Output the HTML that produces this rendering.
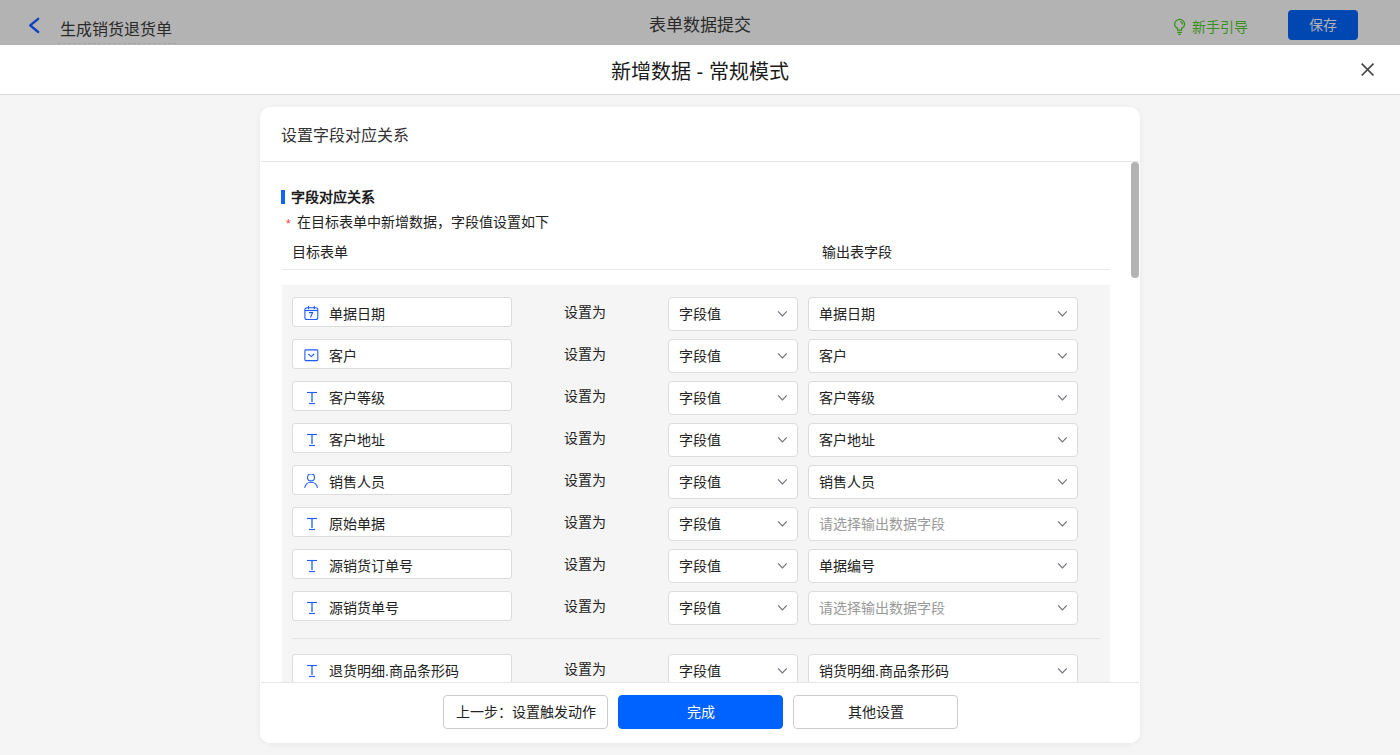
<!DOCTYPE html>
<html lang="zh-CN"><head><meta charset="utf-8">
<style>
*{margin:0;padding:0;box-sizing:border-box}
html,body{width:1400px;height:755px;overflow:hidden;background:#f5f5f5;font-family:"Liberation Sans",sans-serif;color:#222}
.t{position:absolute;white-space:nowrap;line-height:1}
#topbar{position:absolute;left:0;top:0;width:1400px;height:45px;background:#b3b3b3}
#mhead{position:absolute;left:0;top:45px;width:1400px;height:50px;background:#fff;border-bottom:1px solid #dadada}
#card{position:absolute;left:260px;top:107px;width:880px;height:636px;background:#fff;border-radius:10px;overflow:hidden;box-shadow:0 1px 6px rgba(0,0,0,0.06)}
#scroll{position:absolute;left:0;top:55px;width:880px;height:520px;overflow:hidden}
.box{position:absolute;left:292px;width:220px;height:30px;background:#fff;border:1px solid #dcdcdc;border-radius:3px}
.box .ic{position:absolute}
.bt{position:absolute;left:36px;top:8.5px;font-size:14px;line-height:14px;white-space:nowrap;color:#222}
.setas{left:564px;font-size:14px;color:#222}
.sel{position:absolute;height:34px;background:#fff;border:1px solid #dcdcdc;border-radius:4px}
.s1{left:668px;width:130px}
.s2{left:808px;width:270px}
.st{position:absolute;left:10px;top:9px;font-size:14px;line-height:14px;white-space:nowrap;color:#222}
.st.ph{color:#999}
.chev{position:absolute;right:9px;top:12px}
.btn{position:absolute;top:695px;height:34px;width:165px;border:1px solid #cccccc;border-radius:4px;background:#fff;font-size:14px;text-align:center;line-height:32px;color:#222;white-space:nowrap}
</style></head><body>
<div id="topbar">
 <svg style="position:absolute;left:28px;top:17px" width="12" height="17" viewBox="0 0 12 17"><path d="M10.2 1.8L2.2 8.4 10.2 15" fill="none" stroke="#0b40c2" stroke-width="2.3" stroke-linecap="round" stroke-linejoin="round"/></svg>
 <span class="t" style="left:60px;top:22px;font-size:16px;color:#2a2a2a">生成销货退货单</span>
 <div style="position:absolute;left:58px;top:43px;width:120px;height:1px;background-image:linear-gradient(to right,#a5a5a5 60%,transparent 60%);background-size:5px 1px"></div>
 <span class="t" style="left:649px;top:17px;font-size:17px;color:#2a2a2a">表单数据提交</span>
 <svg style="position:absolute;left:1172px;top:17px" width="16" height="19" viewBox="0 0 16 19"><path d="M5.6 13.1v-1.7C3.8 10.3 2.6 9 2.6 7.4a5 5 0 0 1 10 0c0 1.6-1.2 2.9-3 4v1.7z" fill="none" stroke="#3a8f1c" stroke-width="1.25"/><path d="M8.1 4.5a3 3 0 0 1 2.3 3" fill="none" stroke="#3a8f1c" stroke-width="1.25"/><line x1="5.2" y1="15.4" x2="10" y2="15.4" stroke="#3a8f1c" stroke-width="1.2"/><line x1="6.3" y1="17.3" x2="8.9" y2="17.3" stroke="#3a8f1c" stroke-width="1.2"/></svg>
 <span class="t" style="left:1192px;top:20px;font-size:14px;color:#3a8f1c">新手引导</span>
 <div style="position:absolute;left:1288px;top:10px;width:70px;height:30px;background:#0047b2;border-radius:4px"></div>
 <span class="t" style="left:1309px;top:18px;font-size:14px;color:#b3b3b3">保存</span>
</div>
<div id="mhead">
 <span class="t" style="left:611px;top:17px;font-size:20px;color:#1a1a1a">新增数据 - 常规模式</span>
 <svg style="position:absolute;left:1360px;top:17px" width="15" height="15" viewBox="0 0 15 15"><path d="M1.7 1.7l11.8 11.8M13.5 1.7L1.7 13.5" stroke="#454545" stroke-width="1.7"/></svg>
</div>
<div id="card"></div>
<span class="t" style="left:281px;top:128px;font-size:16px;color:#333">设置字段对应关系</span>
<div style="position:absolute;left:261px;top:161px;width:878px;height:1px;background:#e6e6e6"></div>
<div style="position:absolute;left:1131px;top:162px;width:8px;height:116px;background:#b3b3b3;border-radius:4px"></div>
<div style="position:absolute;left:281px;top:190px;width:4px;height:14px;background:#1463ff"></div>
<span class="t" style="left:291px;top:190px;font-size:14px;font-weight:bold;color:#1a1a1a">字段对应关系</span>
<span class="t" style="left:286px;top:218px;font-size:12px;color:#ff3b3b">*</span>
<span class="t" style="left:297px;top:215px;font-size:14px;color:#222">在目标表单中新增数据，字段值设置如下</span>
<span class="t" style="left:292px;top:245px;font-size:14px;color:#222">目标表单</span>
<span class="t" style="left:822px;top:245px;font-size:14px;color:#222">输出表字段</span>
<div style="position:absolute;left:282px;top:269px;width:828px;height:1px;background:#e6e6e6"></div>
<div style="position:absolute;left:282px;top:285px;width:828px;height:398px;background:#f5f5f5"></div>
<div style="position:absolute;left:292px;top:638px;width:808px;height:1px;background:#e2e2e2"></div>
<div class="box" style="top:297px"><svg class="ic" width="16" height="16" viewBox="0 0 16 16" style="left:11px;top:8px"><rect x="0.9" y="1.7" width="12.9" height="11.8" rx="2" fill="none" stroke="#1f5cff" stroke-width="1.1"/><line x1="0.9" y1="4.5" x2="13.8" y2="4.5" stroke="#1f5cff" stroke-width="1.2"/><line x1="4.5" y1="0" x2="4.5" y2="3.2" fill="none" stroke="#1f5cff" stroke-width="1.1"/><line x1="10.3" y1="0" x2="10.3" y2="3.2" fill="none" stroke="#1f5cff" stroke-width="1.1"/><path d="M4.9 6.6h3.7l-2.1 4.9" fill="none" stroke="#1f5cff" stroke-width="1.1"/></svg><span class="bt">单据日期</span></div>
<span class="t setas" style="top:305px">设置为</span>
<div class="sel s1" style="top:297px"><span class="st">字段值</span><svg class="chev" width="12" height="8" viewBox="0 0 12 8"><path d="M2 1.3L6.4 5.9 10.8 1.3" fill="none" stroke="#6b6f78" stroke-width="1.1"/></svg></div>
<div class="sel s2" style="top:297px"><span class="st">单据日期</span><svg class="chev" width="12" height="8" viewBox="0 0 12 8"><path d="M2 1.3L6.4 5.9 10.8 1.3" fill="none" stroke="#6b6f78" stroke-width="1.1"/></svg></div>
<div class="box" style="top:339px"><svg class="ic" width="16" height="16" viewBox="0 0 16 16" style="left:11px;top:8px"><rect x="0.9" y="1.9" width="12.9" height="10.7" rx="0.8" fill="none" stroke="#1f5cff" stroke-width="1.1"/><path d="M4.4 6l2.9 2.6 2.7-2.6" fill="none" stroke="#1f5cff" stroke-width="1.1"/></svg><span class="bt">客户</span></div>
<span class="t setas" style="top:347px">设置为</span>
<div class="sel s1" style="top:339px"><span class="st">字段值</span><svg class="chev" width="12" height="8" viewBox="0 0 12 8"><path d="M2 1.3L6.4 5.9 10.8 1.3" fill="none" stroke="#6b6f78" stroke-width="1.1"/></svg></div>
<div class="sel s2" style="top:339px"><span class="st">客户</span><svg class="chev" width="12" height="8" viewBox="0 0 12 8"><path d="M2 1.3L6.4 5.9 10.8 1.3" fill="none" stroke="#6b6f78" stroke-width="1.1"/></svg></div>
<div class="box" style="top:381px"><svg class="ic" width="16" height="16" viewBox="0 0 16 16" style="left:11px;top:8px"><line x1="3" y1="2.5" x2="13" y2="2.5" fill="none" stroke="#1f5cff" stroke-width="1.1"/><line x1="8" y1="2.5" x2="8" y2="12" stroke="#1f5cff" stroke-width="1.3"/><line x1="5" y1="13.5" x2="11" y2="13.5" fill="none" stroke="#1f5cff" stroke-width="1.1"/></svg><span class="bt">客户等级</span></div>
<span class="t setas" style="top:389px">设置为</span>
<div class="sel s1" style="top:381px"><span class="st">字段值</span><svg class="chev" width="12" height="8" viewBox="0 0 12 8"><path d="M2 1.3L6.4 5.9 10.8 1.3" fill="none" stroke="#6b6f78" stroke-width="1.1"/></svg></div>
<div class="sel s2" style="top:381px"><span class="st">客户等级</span><svg class="chev" width="12" height="8" viewBox="0 0 12 8"><path d="M2 1.3L6.4 5.9 10.8 1.3" fill="none" stroke="#6b6f78" stroke-width="1.1"/></svg></div>
<div class="box" style="top:423px"><svg class="ic" width="16" height="16" viewBox="0 0 16 16" style="left:11px;top:8px"><line x1="3" y1="2.5" x2="13" y2="2.5" fill="none" stroke="#1f5cff" stroke-width="1.1"/><line x1="8" y1="2.5" x2="8" y2="12" stroke="#1f5cff" stroke-width="1.3"/><line x1="5" y1="13.5" x2="11" y2="13.5" fill="none" stroke="#1f5cff" stroke-width="1.1"/></svg><span class="bt">客户地址</span></div>
<span class="t setas" style="top:431px">设置为</span>
<div class="sel s1" style="top:423px"><span class="st">字段值</span><svg class="chev" width="12" height="8" viewBox="0 0 12 8"><path d="M2 1.3L6.4 5.9 10.8 1.3" fill="none" stroke="#6b6f78" stroke-width="1.1"/></svg></div>
<div class="sel s2" style="top:423px"><span class="st">客户地址</span><svg class="chev" width="12" height="8" viewBox="0 0 12 8"><path d="M2 1.3L6.4 5.9 10.8 1.3" fill="none" stroke="#6b6f78" stroke-width="1.1"/></svg></div>
<div class="box" style="top:465px"><svg class="ic" width="16" height="16" viewBox="0 0 16 16" style="left:11px;top:8px"><circle cx="7" cy="3.4" r="3.5" fill="none" stroke="#1f5cff" stroke-width="1.1"/><path d="M0.7 13.8A6.5 6.8 0 0 1 13.5 13.8" fill="none" stroke="#1f5cff" stroke-width="1.1"/></svg><span class="bt">销售人员</span></div>
<span class="t setas" style="top:473px">设置为</span>
<div class="sel s1" style="top:465px"><span class="st">字段值</span><svg class="chev" width="12" height="8" viewBox="0 0 12 8"><path d="M2 1.3L6.4 5.9 10.8 1.3" fill="none" stroke="#6b6f78" stroke-width="1.1"/></svg></div>
<div class="sel s2" style="top:465px"><span class="st">销售人员</span><svg class="chev" width="12" height="8" viewBox="0 0 12 8"><path d="M2 1.3L6.4 5.9 10.8 1.3" fill="none" stroke="#6b6f78" stroke-width="1.1"/></svg></div>
<div class="box" style="top:507px"><svg class="ic" width="16" height="16" viewBox="0 0 16 16" style="left:11px;top:8px"><line x1="3" y1="2.5" x2="13" y2="2.5" fill="none" stroke="#1f5cff" stroke-width="1.1"/><line x1="8" y1="2.5" x2="8" y2="12" stroke="#1f5cff" stroke-width="1.3"/><line x1="5" y1="13.5" x2="11" y2="13.5" fill="none" stroke="#1f5cff" stroke-width="1.1"/></svg><span class="bt">原始单据</span></div>
<span class="t setas" style="top:515px">设置为</span>
<div class="sel s1" style="top:507px"><span class="st">字段值</span><svg class="chev" width="12" height="8" viewBox="0 0 12 8"><path d="M2 1.3L6.4 5.9 10.8 1.3" fill="none" stroke="#6b6f78" stroke-width="1.1"/></svg></div>
<div class="sel s2" style="top:507px"><span class="st ph">请选择输出数据字段</span><svg class="chev" width="12" height="8" viewBox="0 0 12 8"><path d="M2 1.3L6.4 5.9 10.8 1.3" fill="none" stroke="#6b6f78" stroke-width="1.1"/></svg></div>
<div class="box" style="top:549px"><svg class="ic" width="16" height="16" viewBox="0 0 16 16" style="left:11px;top:8px"><line x1="3" y1="2.5" x2="13" y2="2.5" fill="none" stroke="#1f5cff" stroke-width="1.1"/><line x1="8" y1="2.5" x2="8" y2="12" stroke="#1f5cff" stroke-width="1.3"/><line x1="5" y1="13.5" x2="11" y2="13.5" fill="none" stroke="#1f5cff" stroke-width="1.1"/></svg><span class="bt">源销货订单号</span></div>
<span class="t setas" style="top:557px">设置为</span>
<div class="sel s1" style="top:549px"><span class="st">字段值</span><svg class="chev" width="12" height="8" viewBox="0 0 12 8"><path d="M2 1.3L6.4 5.9 10.8 1.3" fill="none" stroke="#6b6f78" stroke-width="1.1"/></svg></div>
<div class="sel s2" style="top:549px"><span class="st">单据编号</span><svg class="chev" width="12" height="8" viewBox="0 0 12 8"><path d="M2 1.3L6.4 5.9 10.8 1.3" fill="none" stroke="#6b6f78" stroke-width="1.1"/></svg></div>
<div class="box" style="top:591px"><svg class="ic" width="16" height="16" viewBox="0 0 16 16" style="left:11px;top:8px"><line x1="3" y1="2.5" x2="13" y2="2.5" fill="none" stroke="#1f5cff" stroke-width="1.1"/><line x1="8" y1="2.5" x2="8" y2="12" stroke="#1f5cff" stroke-width="1.3"/><line x1="5" y1="13.5" x2="11" y2="13.5" fill="none" stroke="#1f5cff" stroke-width="1.1"/></svg><span class="bt">源销货单号</span></div>
<span class="t setas" style="top:599px">设置为</span>
<div class="sel s1" style="top:591px"><span class="st">字段值</span><svg class="chev" width="12" height="8" viewBox="0 0 12 8"><path d="M2 1.3L6.4 5.9 10.8 1.3" fill="none" stroke="#6b6f78" stroke-width="1.1"/></svg></div>
<div class="sel s2" style="top:591px"><span class="st ph">请选择输出数据字段</span><svg class="chev" width="12" height="8" viewBox="0 0 12 8"><path d="M2 1.3L6.4 5.9 10.8 1.3" fill="none" stroke="#6b6f78" stroke-width="1.1"/></svg></div>
<div class="box" style="top:654px"><svg class="ic" width="16" height="16" viewBox="0 0 16 16" style="left:11px;top:8px"><line x1="3" y1="2.5" x2="13" y2="2.5" fill="none" stroke="#1f5cff" stroke-width="1.1"/><line x1="8" y1="2.5" x2="8" y2="12" stroke="#1f5cff" stroke-width="1.3"/><line x1="5" y1="13.5" x2="11" y2="13.5" fill="none" stroke="#1f5cff" stroke-width="1.1"/></svg><span class="bt">退货明细.商品条形码</span></div>
<span class="t setas" style="top:662px">设置为</span>
<div class="sel s1" style="top:654px"><span class="st">字段值</span><svg class="chev" width="12" height="8" viewBox="0 0 12 8"><path d="M2 1.3L6.4 5.9 10.8 1.3" fill="none" stroke="#6b6f78" stroke-width="1.1"/></svg></div>
<div class="sel s2" style="top:654px"><span class="st">销货明细.商品条形码</span><svg class="chev" width="12" height="8" viewBox="0 0 12 8"><path d="M2 1.3L6.4 5.9 10.8 1.3" fill="none" stroke="#6b6f78" stroke-width="1.1"/></svg></div>
<div style="position:absolute;left:260px;top:682px;width:880px;height:61px;background:#fff;border-radius:0 0 10px 10px"></div><div style="position:absolute;left:261px;top:682px;width:878px;height:1px;background:#e6e6e6"></div>
<div class="btn" style="left:443px">上一步：设置触发动作</div>
<div class="btn" style="left:618px;background:#0062ff;border-color:#0062ff;color:#fff">完成</div>
<div class="btn" style="left:793px">其他设置</div>
</body></html>
